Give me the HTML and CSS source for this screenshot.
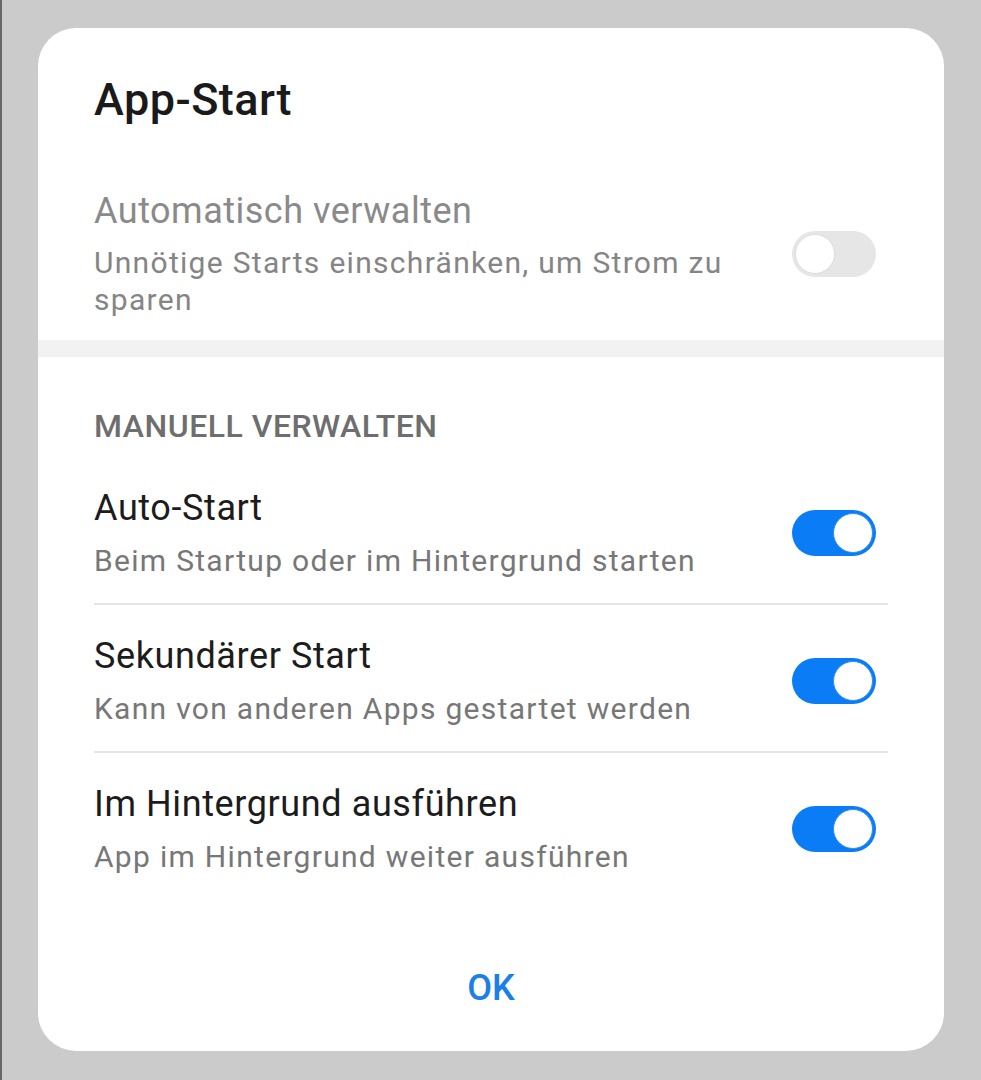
FILE: index.html
```html
<!DOCTYPE html>
<html lang="de">
<head>
    <meta charset="UTF-8">
    <meta name="viewport" content="width=device-width, initial-scale=1.0">
    <title>App-Start</title>
    <link rel="stylesheet" href="styles.css">
</head>
<body>
    <div class="dialog">
        <h1 class="dialog-title">App-Start</h1>

        <div class="auto-row">
            <div class="row-text">
                <div class="auto-title">Automatisch verwalten</div>
                <div class="auto-desc">Unnötige Starts einschränken, um Strom zu sparen</div>
            </div>
            <span class="switch"></span>
        </div>

        <div class="band"></div>

        <div class="manual">
            <div class="section-label">MANUELL VERWALTEN</div>

            <div class="row">
                <div class="row-text">
                    <div class="row-title">Auto-Start</div>
                    <div class="row-desc">Beim Startup oder im Hintergrund starten</div>
                </div>
                <span class="switch on"></span>
            </div>
            <div class="row">
                <div class="row-text">
                    <div class="row-title">Sekundärer Start</div>
                    <div class="row-desc">Kann von anderen Apps gestartet werden</div>
                </div>
                <span class="switch on"></span>
            </div>
            <div class="row last">
                <div class="row-text">
                    <div class="row-title">Im Hintergrund ausführen</div>
                    <div class="row-desc">App im Hintergrund weiter ausführen</div>
                </div>
                <span class="switch on"></span>
            </div>
        </div>

        <div class="dialog-footer">
            <button class="ok-button">OK</button>
        </div>
    </div>
</body>
</html>
```

FILE: styles.css
```css
body {
    margin: 0;
    padding: 28px 0 0 0;
    background-color: #cbcbcb;
    border-left: 2px solid #666666;
    min-height: 1080px;
    box-sizing: border-box;
    font-family: Roboto, "Noto Sans", sans-serif;
}

.dialog {
    width: 906px;
    margin-left: 36px;
    background-color: #ffffff;
    border-radius: 38px;
    padding-top: 45px;
    overflow: hidden;
}

.dialog-title {
    margin: 0 56px;
    font-size: 45px;
    line-height: 54px;
    font-weight: 500;
    letter-spacing: 0.45px;
    color: #1a1a1a;
}

.auto-row {
    display: flex;
    align-items: center;
    gap: 40px;
    margin: 62px 68px 0 56px;
}

.row-text {
    flex: 1;
}

.auto-title {
    font-size: 36px;
    line-height: 44px;
    letter-spacing: 0.5px;
    color: #8a8a8a;
}

.auto-desc {
    margin-top: 11px;
    font-size: 30px;
    line-height: 37px;
    letter-spacing: 1.3px;
    color: #858585;
}

.band {
    height: 17px;
    margin-top: 22px;
    background-color: #f2f2f2;
}

.manual {
    padding: 49px 56px 0 56px;
}

.section-label {
    font-size: 32px;
    line-height: 40px;
    font-weight: 500;
    letter-spacing: 0.5px;
    color: #6e6e6e;
    margin-bottom: 11px;
}

.row {
    display: flex;
    align-items: center;
    gap: 40px;
    padding: 29px 12px 23px 0;
    border-bottom: 2px solid #e6e6e6;
}

.row.last {
    border-bottom: none;
}

.row-title {
    font-size: 36px;
    line-height: 44px;
    letter-spacing: 0.6px;
    color: #1c1c1c;
}

.row-desc {
    margin-top: 12px;
    font-size: 30px;
    line-height: 38px;
    letter-spacing: 1.3px;
    color: #777777;
}

.switch {
    position: relative;
    flex: none;
    width: 84px;
    height: 46px;
    border-radius: 23px;
    background-color: #e6e6e6;
    box-sizing: border-box;
}

.switch::after {
    content: "";
    position: absolute;
    top: 3px;
    left: 3px;
    width: 40px;
    height: 40px;
    border-radius: 50%;
    background-color: #ffffff;
    border: 1px solid #dddddd;
    box-sizing: border-box;
}

.switch.on {
    background-color: #0a7cf5;
}

.switch.on::after {
    left: 41px;
    border-color: #2f8ff5;
}

.dialog-footer {
    display: flex;
    justify-content: center;
    padding: 67px 0 41px 0;
}

.ok-button {
    border: none;
    background: none;
    padding: 0;
    font-family: Roboto, "Noto Sans", sans-serif;
    font-size: 36px;
    line-height: 44px;
    font-weight: 500;
    color: #1a7fe6;
    cursor: pointer;
}
```
